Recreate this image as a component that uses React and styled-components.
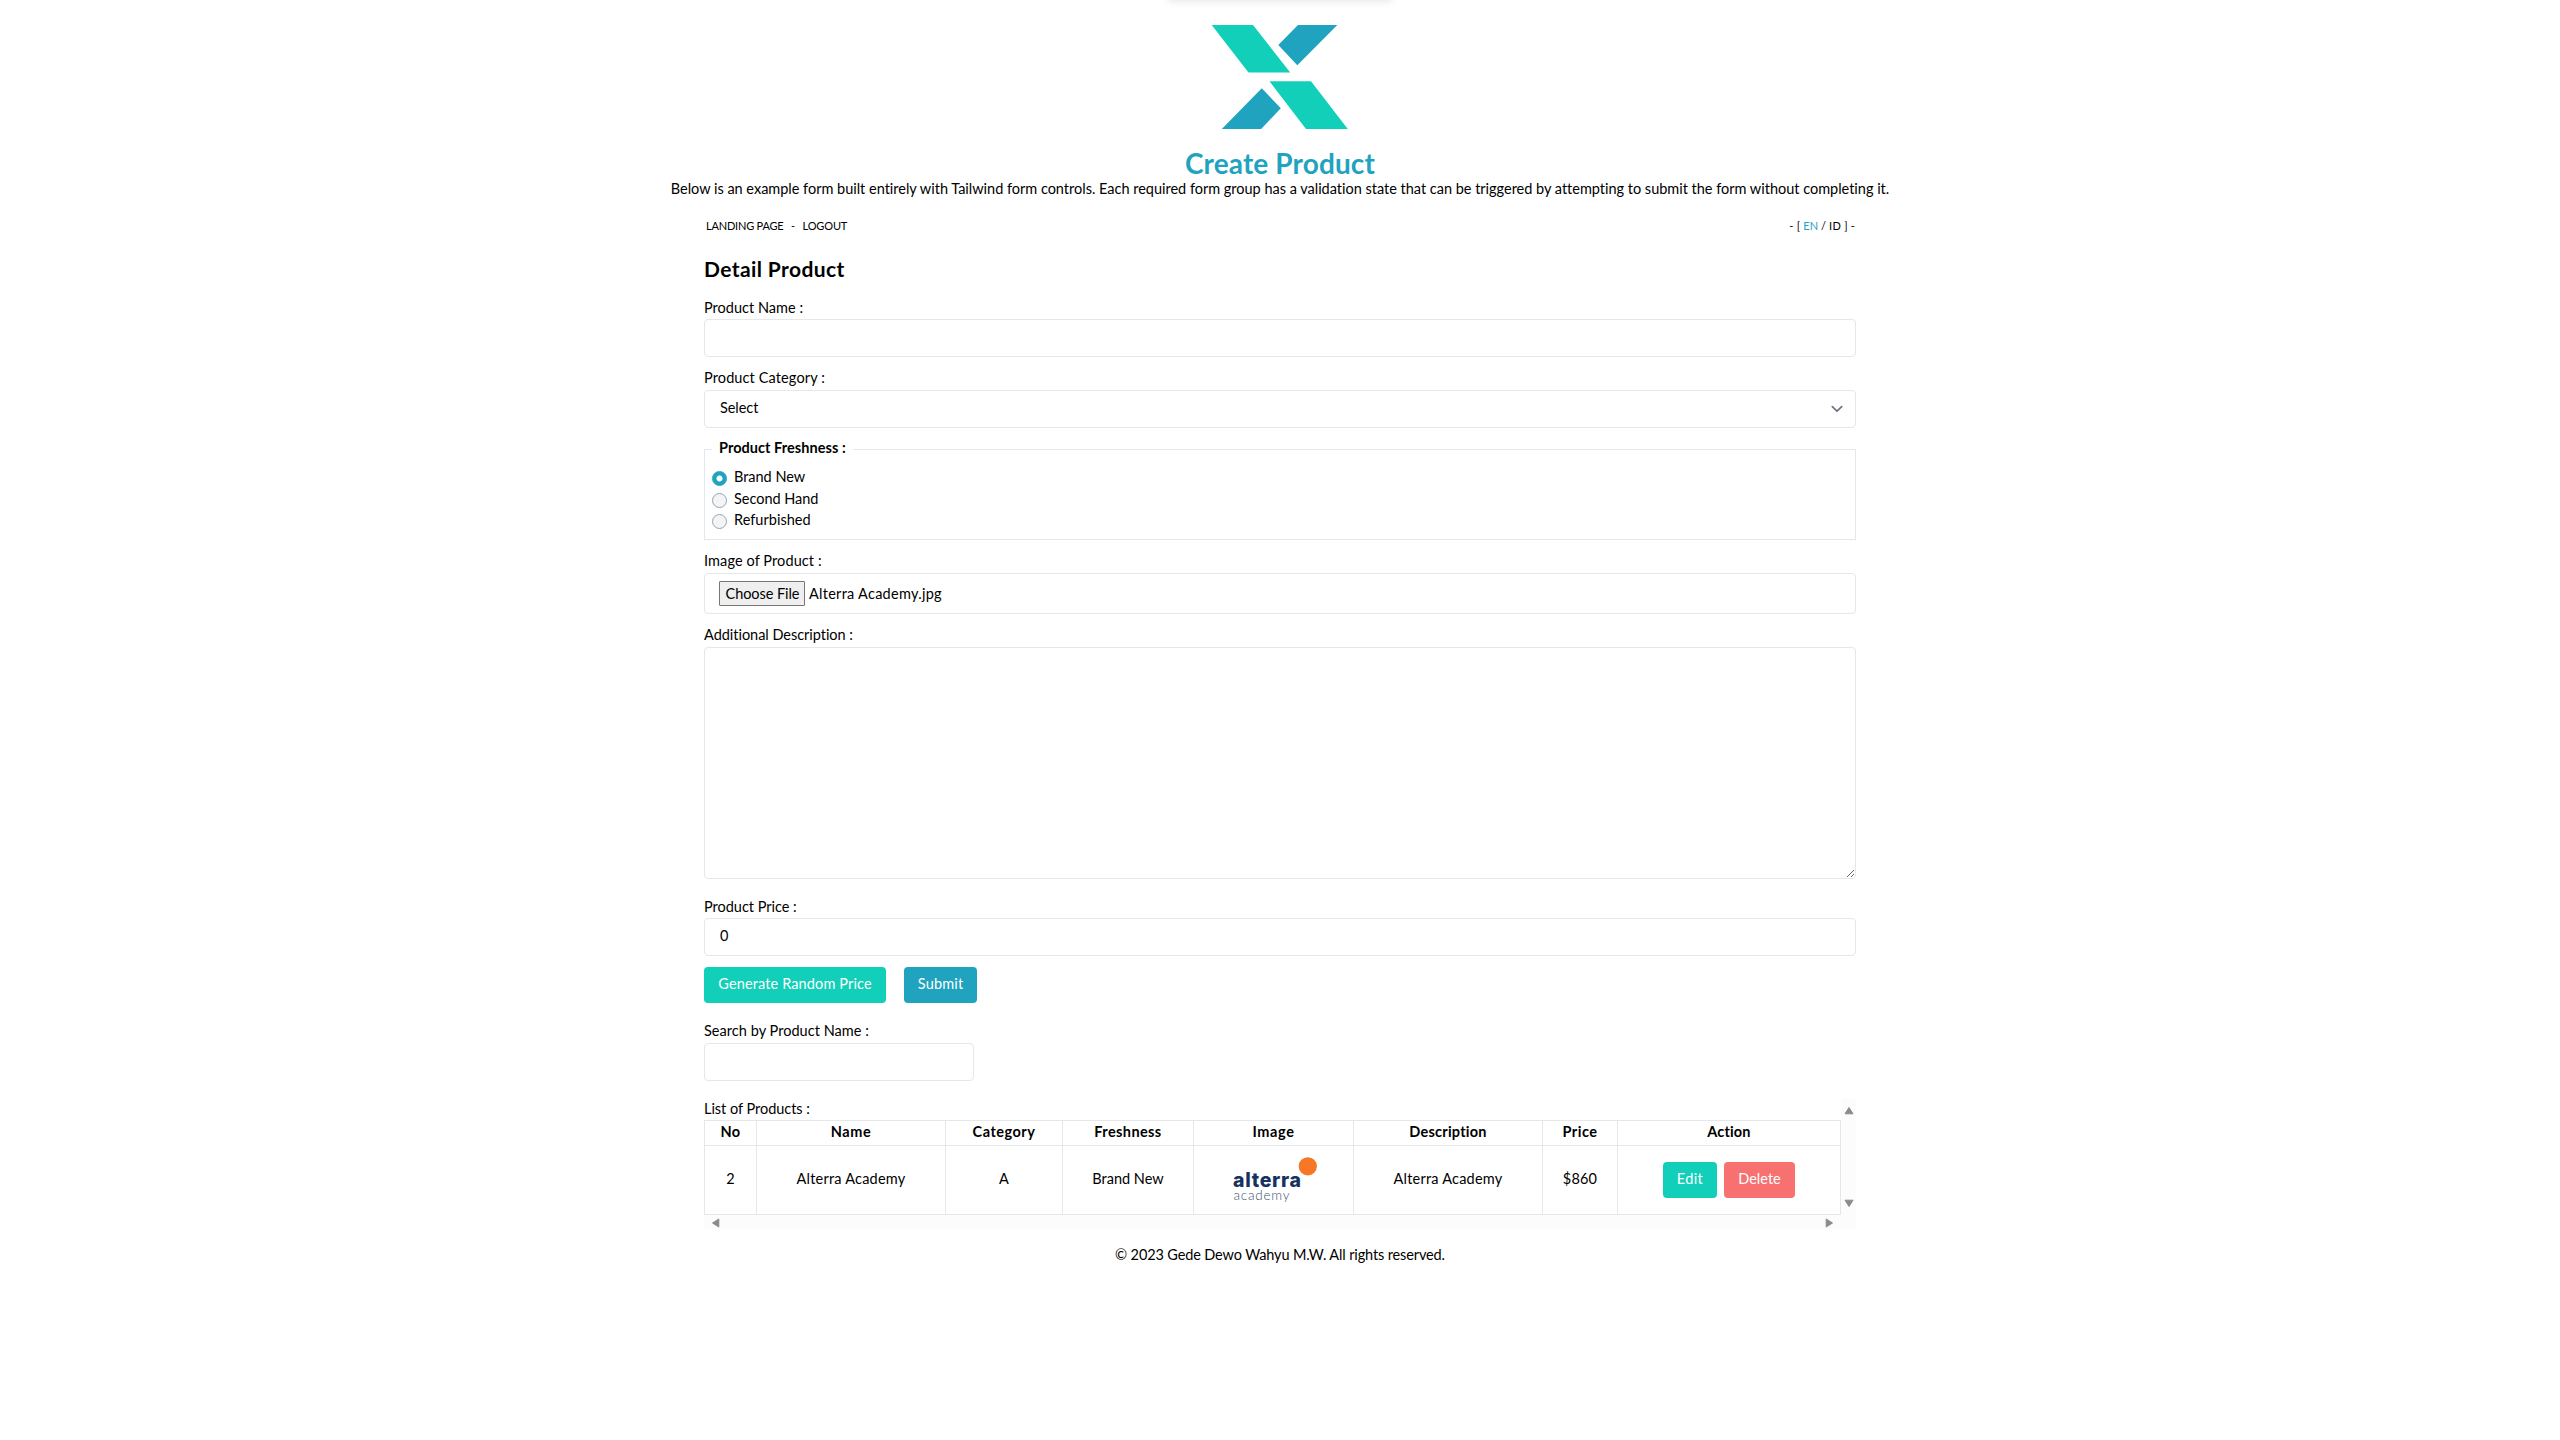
import React from "react";
import styled, { createGlobalStyle } from "styled-components";

const teal = "#12cfb9";
const blue = "#1fa3be";
const line = "#e5e7eb";

const GlobalStyle = createGlobalStyle`
  *, *::before, *::after { box-sizing: border-box; }
  body {
    margin: 0;
    background: #fff;
    color: #000;
    font-family: Lato, "Open Sans", sans-serif;
    font-size: 14.5px;
    line-height: 20px;
  }
  h1, h2, p { margin: 0; }
  input, textarea, button, select { font: inherit; color: inherit; }
`;

const Page = styled.div`
  min-height: 1440px;
  overflow: hidden;
  display: flex;
  flex-direction: column;
  align-items: center;
`;

const TopShadow = styled.div`
  position: absolute;
  top: -20px;
  left: 1168px;
  width: 224px;
  height: 20px;
  box-shadow: 0 1px 8px rgba(0, 0, 0, 0.11);
`;

const Txt = styled.span`
  letter-spacing: ${(p) => p.$ls || 0}px;
  white-space: nowrap;
`;

const Header = styled.header`
  display: flex;
  flex-direction: column;
  align-items: center;
  padding-top: 25px;
`;

const Logo = styled.svg`
  display: block;
  width: 136px;
  height: 104px;
  overflow: visible;
`;

const Title = styled.h1`
  margin-top: 18px;
  font-size: 28px;
  line-height: 32px;
  font-weight: 700;
  color: ${blue};
`;

const Main = styled.main`
  width: 1152px;
  display: flex;
  flex-direction: column;
`;

const Nav = styled.nav`
  display: flex;
  justify-content: space-between;
  margin-top: 20px;
  padding: 0 1px 0 2px;
  font-size: 11px;
  line-height: 14px;
`;

const NavGroup = styled.div`
  display: flex;
  gap: ${(p) => p.$gap}px;
`;

const Lang = styled(Txt)`
  color: ${(p) => (p.$active ? blue : "#000")};
`;

const SectionTitle = styled.h2`
  margin-top: 23px;
  font-size: 21px;
  line-height: 26px;
  font-weight: 700;
`;

const Field = styled.div`
  display: flex;
  flex-direction: column;
  margin-top: ${(p) => p.$top}px;
`;

const Label = styled.label`
  height: ${(p) => p.$h || 22}px;
  line-height: 20px;
`;

const Input = styled.input`
  width: ${(p) => p.$w || "100%"};
  height: 38px;
  padding: 0 15px 3px;
  border: 1px solid ${line};
  border-radius: 4px;
  background: #fff;
  outline: none;
`;

const SelectBox = styled.div`
  display: flex;
  align-items: center;
  justify-content: space-between;
  height: 38px;
  padding: 0 12px 2px 15px;
  border: 1px solid ${line};
  border-radius: 4px;
`;

const Chevron = styled.svg`
  width: 12px;
  height: 8px;
  margin-top: 2px;
`;

const Fieldset = styled.fieldset`
  height: 101px;
  margin: 11px 0 0;
  padding: 7px 7px 0;
  border: 1px solid ${line};
`;

const Legend = styled.legend`
  height: 21px;
  padding: 0 7px 0 7px;
  line-height: 17px;
  font-weight: 700;
`;

const RadioRow = styled.label`
  display: flex;
  gap: 7px;
  height: 21.5px;
`;

const Radio = styled.input`
  appearance: none;
  flex: none;
  width: 15px;
  height: 15px;
  margin: 4px 0 0;
  border: 1px solid #9ca3af;
  border-radius: 50%;
  background: #f3f4f6;
  &:checked {
    border-color: ${blue};
    background: radial-gradient(circle, #fff 2.6px, ${blue} 3.4px) border-box;
  }
`;

const FileBox = styled.div`
  display: flex;
  align-items: center;
  gap: 4px;
  height: 41px;
  padding: 0 14px;
  border: 1px solid ${line};
  border-radius: 4px;
`;

const FileButton = styled.button`
  width: 86px;
  height: 25px;
  padding: 0 0 0 1px;
  border: 1px solid #767676;
  border-radius: 1px;
  background: #efefef;
  line-height: 20px;
`;

const TextArea = styled.textarea`
  display: block;
  width: 100%;
  height: 232px;
  border: 1px solid ${line};
  border-radius: 4px;
  background: #fff;
  outline: none;
  resize: both;
`;

const Actions = styled.div`
  display: flex;
  gap: ${(p) => p.$gap}px;
  margin-top: ${(p) => p.$top || 0}px;
  justify-content: ${(p) => p.$align || "flex-start"};
`;

const Button = styled.button`
  width: ${(p) => p.$w}px;
  height: 36px;
  padding: 0 0 2px;
  border: 0;
  border-radius: 4px;
  background: ${(p) => p.$bg};
  color: #fff;
  text-align: center;
`;

const ScrollArea = styled.div`
  display: grid;
  grid-template-columns: 1137px 15px;
  grid-template-rows: 116px 15px;
  margin-top: 18px;
`;

const ListLabel = styled.div`
  height: 21px;
  line-height: 19px;
`;

const Table = styled.table`
  width: 1137px;
  table-layout: fixed;
  border-collapse: collapse;
  text-align: center;
`;

const Th = styled.th`
  width: ${(p) => p.$w}px;
  height: 25px;
  padding: 0 0 4px;
  border: 1px solid ${line};
  font-weight: 700;
  line-height: 19px;
`;

const Td = styled.td`
  height: 69px;
  padding: 0 0 ${(p) => (p.$flush ? 0 : 2)}px;
  border: 1px solid ${line};
  vertical-align: middle;
`;

const ProductImage = styled.svg`
  display: block;
  width: 90px;
  height: 56px;
  margin: 0 auto;
`;

const VTrack = styled.div`
  display: flex;
  flex-direction: column;
  justify-content: space-between;
  align-items: center;
  padding: 7px 0 7px;
  background: #fcfcfc;
`;

const HTrack = styled.div`
  grid-column: 1 / 3;
  display: flex;
  justify-content: space-between;
  align-items: center;
  padding: 0 22px 0 7px;
  background: #fcfcfc;
`;

const Arrow = styled.svg`
  display: block;
  width: ${(p) => p.$w}px;
  height: ${(p) => p.$h}px;
  fill: #8b8b8b;
  stroke: #8b8b8b;
  stroke-linejoin: round;
`;

const Footer = styled.footer`
  margin-top: 15px;
`;

const columns = [
  ["No", 52, 0.33],
  ["Name", 189, 0.62],
  ["Category", 117, 0.5],
  ["Freshness", 131, 0.39],
  ["Image", 160, 0.6],
  ["Description", 189, 0.22],
  ["Price", 75, 0.5],
  ["Action", 223, 0.15],
];

const freshness = [
  ["Brand New", -0.02],
  ["Second Hand", -0.02],
  ["Refurbished", 0.02],
];

export default function App() {
  return (
    <Page>
      <GlobalStyle />
      <TopShadow />
      <Header>
        <Logo viewBox="0 0 136 104">
          <path fill={teal} d="M-0.3 0H41L78.2 47.5H36.5Z" />
          <path fill={blue} d="M86 0H125.3L85.3 40.3L66.3 20Z" />
          <path fill={blue} d="M49.8 63.3L68.8 83.3L49.2 104H9.8Z" />
          <path fill={teal} d="M57.5 56.3H99L135.8 104H94Z" />
        </Logo>
        <Title>
          <Txt $ls={0.116}>Create Product</Txt>
        </Title>
        <p>
          <Txt $ls={-0.01}>
            Below is an example form built entirely with Tailwind form controls. Each required form group has a
            validation state that can be triggered by attempting to submit the form without completing it.
          </Txt>
        </p>
      </Header>

      <Main>
        <Nav>
          <NavGroup $gap={7.5}>
            <Txt $ls={-0.2}>LANDING PAGE</Txt>
            <Txt>-</Txt>
            <Txt $ls={-0.15}>LOGOUT</Txt>
          </NavGroup>
          <NavGroup $gap={2.8}>
            <Txt $ls={0.3}>- [</Txt>
            <Lang $active $ls={0.2}>EN</Lang>
            <Txt>/</Txt>
            <Lang $ls={0.5}>ID</Lang>
            <Txt $ls={0.2}>] -</Txt>
          </NavGroup>
        </Nav>

        <SectionTitle>
          <Txt $ls={0.4}>Detail Product</Txt>
        </SectionTitle>

        <Field $top={16}>
          <Label $h={21}><Txt $ls={0.02}>Product Name :</Txt></Label>
          <Input />
        </Field>

        <Field $top={11}>
          <Label><Txt $ls={0.12}>Product Category :</Txt></Label>
          <SelectBox>
            <Txt $ls={-0.06}>Select</Txt>
            <Chevron viewBox="0 0 12 8" fill="none" stroke="#6b7280" strokeWidth="1.7" strokeLinecap="round" strokeLinejoin="round">
              <path d="M1.3 1.7L6 6.2L10.7 1.7" />
            </Chevron>
          </SelectBox>
        </Field>

        <Fieldset>
          <Legend><Txt $ls={0.05}>Product Freshness :</Txt></Legend>
          {freshness.map(([name, ls], i) => (
            <RadioRow key={name}>
              <Radio type="radio" name="freshness" defaultChecked={i === 0} />
              <Txt $ls={ls}>{name}</Txt>
            </RadioRow>
          ))}
        </Fieldset>

        <Field $top={11}>
          <Label><Txt $ls={0.1}>Image of Product :</Txt></Label>
          <FileBox>
            <FileButton><Txt $ls={-0.06}>Choose File</Txt></FileButton>
            <Txt $ls={0.27}>Alterra Academy.jpg</Txt>
          </FileBox>
        </Field>

        <Field $top={11}>
          <Label><Txt $ls={-0.03}>Additional Description :</Txt></Label>
          <TextArea />
        </Field>

        <Field $top={18}>
          <Label $h={21}><Txt $ls={-0.02}>Product Price :</Txt></Label>
          <Input defaultValue="0" />
        </Field>

        <Actions $gap={18} $top={11}>
          <Button $w={182} $bg={teal}><Txt $ls={0.13}>Generate Random Price</Txt></Button>
          <Button $w={73} $bg={blue}><Txt $ls={0.16}>Submit</Txt></Button>
        </Actions>

        <Field $top={18}>
          <Label><Txt $ls={0.04}>Search by Product Name :</Txt></Label>
          <Input $w="270px" />
        </Field>

        <ScrollArea>
          <div>
            <ListLabel><Txt $ls={-0.03}>List of Products :</Txt></ListLabel>
            <Table>
              <thead>
                <tr>
                  {columns.map(([name, w, ls]) => (
                    <Th key={name} $w={w}><Txt $ls={ls}>{name}</Txt></Th>
                  ))}
                </tr>
              </thead>
              <tbody>
                <tr>
                  <Td>2</Td>
                  <Td><Txt $ls={0.22}>Alterra Academy</Txt></Td>
                  <Td>A</Td>
                  <Td><Txt $ls={0.02}>Brand New</Txt></Td>
                  <Td $flush>
                    <ProductImage viewBox="0 0 90 56">
                      <circle cx="78.8" cy="14.3" r="9.1" fill="#f67824" />
                      <text x="4" y="34.5" textLength="68" fontFamily="Inter, sans-serif" fontWeight="800" fontSize="19.5" fill="#16335f">alterra</text>
                      <text x="4.5" y="47.5" textLength="56" fontFamily="Lato, sans-serif" fontWeight="300" fontSize="13.5" fill="#3c5273">academy</text>
                    </ProductImage>
                  </Td>
                  <Td><Txt $ls={0.22}>Alterra Academy</Txt></Td>
                  <Td><Txt $ls={0.2}>$860</Txt></Td>
                  <Td $flush>
                    <Actions $gap={7} $align="center">
                      <Button $w={54} $bg={teal}><Txt $ls={0.38}>Edit</Txt></Button>
                      <Button $w={71} $bg="#f87171"><Txt $ls={0.01}>Delete</Txt></Button>
                    </Actions>
                  </Td>
                </tr>
              </tbody>
            </Table>
          </div>
          <VTrack>
            <Arrow $w={10} $h={9} viewBox="0 0 10 9"><path d="M5 1.5L9 7.8H1Z" /></Arrow>
            <Arrow $w={10} $h={9} viewBox="0 0 10 9"><path d="M5 7.5L9 1.2H1Z" /></Arrow>
          </VTrack>
          <HTrack>
            <Arrow $w={9} $h={10} viewBox="0 0 9 10"><path d="M1.5 5L7.8 1V9Z" /></Arrow>
            <Arrow $w={9} $h={10} viewBox="0 0 9 10"><path d="M7.5 5L1.2 1V9Z" /></Arrow>
          </HTrack>
        </ScrollArea>
      </Main>

      <Footer>
        <Txt $ls={-0.13}>© 2023 Gede Dewo Wahyu M.W. All rights reserved.</Txt>
      </Footer>
    </Page>
  );
}
